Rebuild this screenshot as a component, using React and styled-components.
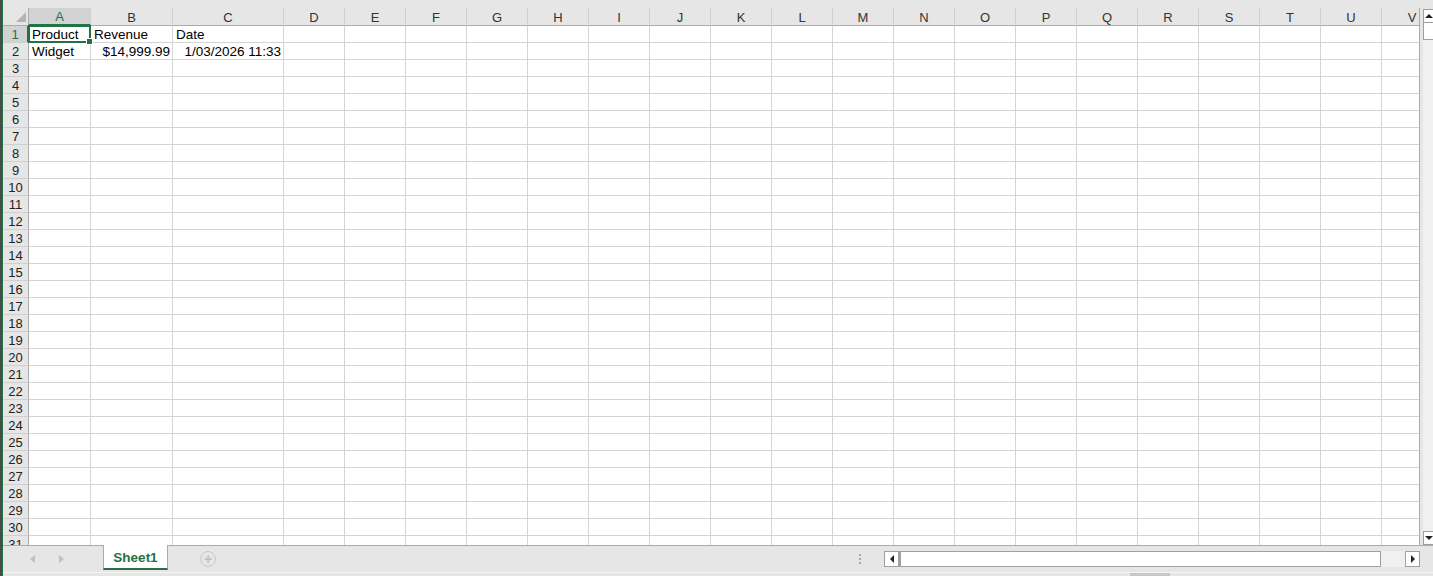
import React from 'react';
import styled, { createGlobalStyle } from 'styled-components';

const GREEN = '#217346';
const GRID = '#d4d4d4';
const HEAD_BORDER = '#ababab';

const Global = createGlobalStyle`
  html, body {
    margin: 0;
    padding: 0;
    width: 1433px;
    height: 576px;
    overflow: hidden;
    background: #e6e6e6;
  }
  body {
    font-family: "Liberation Sans", Arial, sans-serif;
  }
  * { box-sizing: border-box; }
`;

const Window = styled.div`
  display: flex;
  width: 1433px;
  height: 576px;
`;

const LeftEdge = styled.div`
  flex: none;
  width: 3px;
  background: #4a4a4a;
  border-right: 1px solid ${GREEN};
`;

const Workbook = styled.div`
  flex: 1;
  min-width: 0;
  display: flex;
  flex-direction: column;
`;

const TopStrip = styled.div`
  flex: none;
  height: 8px;
  background: #e6e6e6;
`;

const SheetArea = styled.div`
  flex: none;
  height: 537px;
  display: flex;
`;

const GridViewport = styled.div`
  flex: none;
  width: 1417px;
  overflow: hidden;
  background: #fff;
  border-right: 1px solid ${HEAD_BORDER};
`;

const Grid = styled.div`
  display: grid;
  grid-template-columns: ${(p) => p.$cols};
  grid-template-rows: 18px;
  grid-auto-rows: 17px;
  width: max-content;
  font-size: 13px;
`;

const Corner = styled.div`
  background: #e6e6e6;
  border-right: 1px solid ${HEAD_BORDER};
  border-bottom: 1px solid ${HEAD_BORDER};
  display: flex;
  align-items: flex-end;
  justify-content: flex-end;
  padding: 0 2px 3px 0;
`;

const CornerTriangle = styled.div`
  width: 0;
  height: 0;
  border-left: 10px solid transparent;
  border-bottom: 10px solid #b4b4b4;
`;

const ColHeader = styled.div`
  background: ${(p) => (p.$selected ? '#d2d2d2' : '#e6e6e6')};
  color: ${(p) => (p.$selected ? GREEN : '#333')};
  border-right: 1px solid #d0d0d0;
  border-bottom: ${(p) => (p.$selected ? `2px solid ${GREEN}` : `1px solid ${HEAD_BORDER}`)};
  display: flex;
  align-items: center;
  justify-content: center;
  padding-top: 1px;
  line-height: 1;
`;

const RowHeader = styled.div`
  background: ${(p) => (p.$selected ? '#d2d2d2' : '#e6e6e6')};
  color: ${(p) => (p.$selected ? GREEN : '#222')};
  border-right: ${(p) => (p.$selected ? `2px solid ${GREEN}` : `1px solid ${HEAD_BORDER}`)};
  border-bottom: 1px solid #d0d0d0;
  display: flex;
  align-items: center;
  justify-content: center;
  line-height: 1;
`;

const Cell = styled.div`
  position: relative;
  border-right: 1px solid ${GRID};
  border-bottom: 1px solid ${GRID};
  padding: 1px 2px 0 3px;
  display: flex;
  align-items: center;
  justify-content: ${(p) => (p.$align === 'right' ? 'flex-end' : 'flex-start')};
  white-space: nowrap;
  color: #000;
  font-size: 13.5px;
  line-height: 1;
`;

const Selection = styled.div`
  position: absolute;
  left: -1px;
  top: -1px;
  right: -1px;
  bottom: -1px;
  border: 2px solid ${GREEN};
  pointer-events: none;
  z-index: 2;
`;

const FillHandle = styled.div`
  position: absolute;
  right: -4px;
  bottom: -4px;
  width: 7px;
  height: 7px;
  background: ${GREEN};
  border: 1px solid #fff;
`;

const VScroll = styled.div`
  flex: 1;
  overflow: hidden;
  background: #e6e6e6;
  padding: 1px 0 0 3px;
  display: flex;
`;

const VScrollInner = styled.div`
  flex: none;
  width: 14px;
  display: flex;
  flex-direction: column;
`;

const ScrollButton = styled.div`
  flex: none;
  width: ${(p) => (p.$horizontal ? '15px' : 'auto')};
  height: ${(p) => (p.$horizontal ? 'auto' : '14px')};
  background: #fff;
  border: 1px solid #a0a0a0;
  display: flex;
  align-items: center;
  justify-content: center;
`;

const Arrow = styled.div`
  width: 0;
  height: 0;
  ${(p) =>
    p.$dir === 'up'
      ? `border-left: 4px solid transparent; border-right: 4px solid transparent; border-bottom: 4px solid #222; margin-right: 2px;`
      : p.$dir === 'down'
      ? `border-left: 4px solid transparent; border-right: 4px solid transparent; border-top: 4px solid #222; margin-right: 2px;`
      : p.$dir === 'left'
      ? `border-top: 4px solid transparent; border-bottom: 4px solid transparent; border-right: 4px solid #222;`
      : `border-top: 4px solid transparent; border-bottom: 4px solid transparent; border-left: 4px solid #222;`}
`;

const VThumb = styled.div`
  flex: none;
  height: 17px;
  background: #fff;
  border: 1px solid #a0a0a0;
  border-top: none;
`;

const Track = styled.div`
  flex: 1;
  background: #f0f0f0;
`;

const TabBar = styled.div`
  flex: none;
  height: 27px;
  display: flex;
  align-items: stretch;
  border-top: 1px solid ${HEAD_BORDER};
  background: #e6e6e6;
`;

const TabNav = styled.div`
  flex: none;
  width: 100px;
  display: flex;
  align-items: center;
  padding-left: 27px;
  gap: 24px;
`;

const NavArrow = styled.div`
  width: 0;
  height: 0;
  border-top: 4px solid transparent;
  border-bottom: 4px solid transparent;
  ${(p) =>
    p.$dir === 'left'
      ? `border-right: 5px solid #c0c0c0;`
      : `border-left: 5px solid #c0c0c0;`}
`;

const SheetTab = styled.div`
  flex: none;
  width: 65px;
  margin-top: -1px;
  margin-bottom: 2px;
  background: #fff;
  border-left: 1px solid ${HEAD_BORDER};
  border-right: 1px solid ${HEAD_BORDER};
  border-bottom: 2px solid ${GREEN};
  color: ${GREEN};
  font-weight: bold;
  font-size: 13.5px;
  display: flex;
  align-items: center;
  justify-content: center;
  padding-top: 2px;
`;

const AddSheet = styled.div`
  flex: none;
  width: 16px;
  height: 16px;
  margin-left: 32px;
  align-self: center;
  border-radius: 50%;
  border: 1.5px solid #c8c8c8;
  display: flex;
  align-items: center;
  justify-content: center;
  color: #c0c0c0;
  font-size: 14px;
  font-weight: bold;
  line-height: 1;
`;

const Spacer = styled.div`
  flex: 1;
`;

const Splitter = styled.div`
  flex: none;
  width: 26px;
  display: flex;
  flex-direction: column;
  justify-content: center;
  gap: 2px;
  padding-left: 1px;
`;

const Dot = styled.div`
  width: 2px;
  height: 2px;
  background: #a8a8a8;
`;

const HScroll = styled.div`
  flex: none;
  width: 536px;
  height: 16px;
  align-self: center;
  margin-top: -1px;
  display: flex;
`;

const HThumb = styled.div`
  flex: none;
  width: 482px;
  background: #fff;
  border: 1px solid #a0a0a0;
  border-left: 2px solid #a0a0a0;
`;

const RightGap = styled.div`
  flex: none;
  width: 13px;
`;

const BottomStrip = styled.div`
  flex: none;
  height: 4px;
  background: #e6e6e6;
  border-top: 1px solid #f4f4f4;
  display: flex;
`;

const StatusBlock = styled.div`
  margin-left: 1127px;
  width: 40px;
  background: #c8c8c8;
`;

const COLS = [
  { name: 'A', w: 62 },
  { name: 'B', w: 82 },
  { name: 'C', w: 111 },
  ...'DEFGHIJKLMNOPQRSTUV'.split('').map((n) => ({ name: n, w: 61 })),
];

const DATA = {
  1: { A: { v: 'Product' }, B: { v: 'Revenue' }, C: { v: 'Date' } },
  2: {
    A: { v: 'Widget' },
    B: { v: '$14,999.99', align: 'right' },
    C: { v: '1/03/2026 11:33', align: 'right' },
  },
};

const ROWS = Array.from({ length: 31 }, (_, i) => i + 1);

export default function App() {
  const template = ['26px', ...COLS.map((c) => `${c.w}px`)].join(' ');
  return (
    <>
      <Global />
      <Window>
        <LeftEdge />
        <Workbook>
          <TopStrip />
          <SheetArea>
            <GridViewport>
              <Grid $cols={template}>
                <Corner>
                  <CornerTriangle />
                </Corner>
                {COLS.map((c) => (
                  <ColHeader key={c.name} $selected={c.name === 'A'}>
                    {c.name}
                  </ColHeader>
                ))}
                {ROWS.map((r) => (
                  <React.Fragment key={r}>
                    <RowHeader $selected={r === 1}>{r}</RowHeader>
                    {COLS.map((c) => {
                      const d = DATA[r] && DATA[r][c.name];
                      const sel = r === 1 && c.name === 'A';
                      return (
                        <Cell key={c.name} $align={d && d.align}>
                          {d ? d.v : null}
                          {sel && (
                            <Selection>
                              <FillHandle />
                            </Selection>
                          )}
                        </Cell>
                      );
                    })}
                  </React.Fragment>
                ))}
              </Grid>
            </GridViewport>
            <VScroll>
              <VScrollInner>
                <ScrollButton>
                  <Arrow $dir="up" />
                </ScrollButton>
                <VThumb />
                <Track />
                <ScrollButton>
                  <Arrow $dir="down" />
                </ScrollButton>
              </VScrollInner>
            </VScroll>
          </SheetArea>
          <TabBar>
            <TabNav>
              <NavArrow $dir="left" />
              <NavArrow $dir="right" />
            </TabNav>
            <SheetTab>Sheet1</SheetTab>
            <AddSheet>+</AddSheet>
            <Spacer />
            <Splitter>
              <Dot />
              <Dot />
              <Dot />
            </Splitter>
            <HScroll>
              <ScrollButton $horizontal>
                <Arrow $dir="left" />
              </ScrollButton>
              <HThumb />
              <Track />
              <ScrollButton $horizontal>
                <Arrow $dir="right" />
              </ScrollButton>
            </HScroll>
            <RightGap />
          </TabBar>
          <BottomStrip>
            <StatusBlock />
          </BottomStrip>
        </Workbook>
      </Window>
    </>
  );
}
